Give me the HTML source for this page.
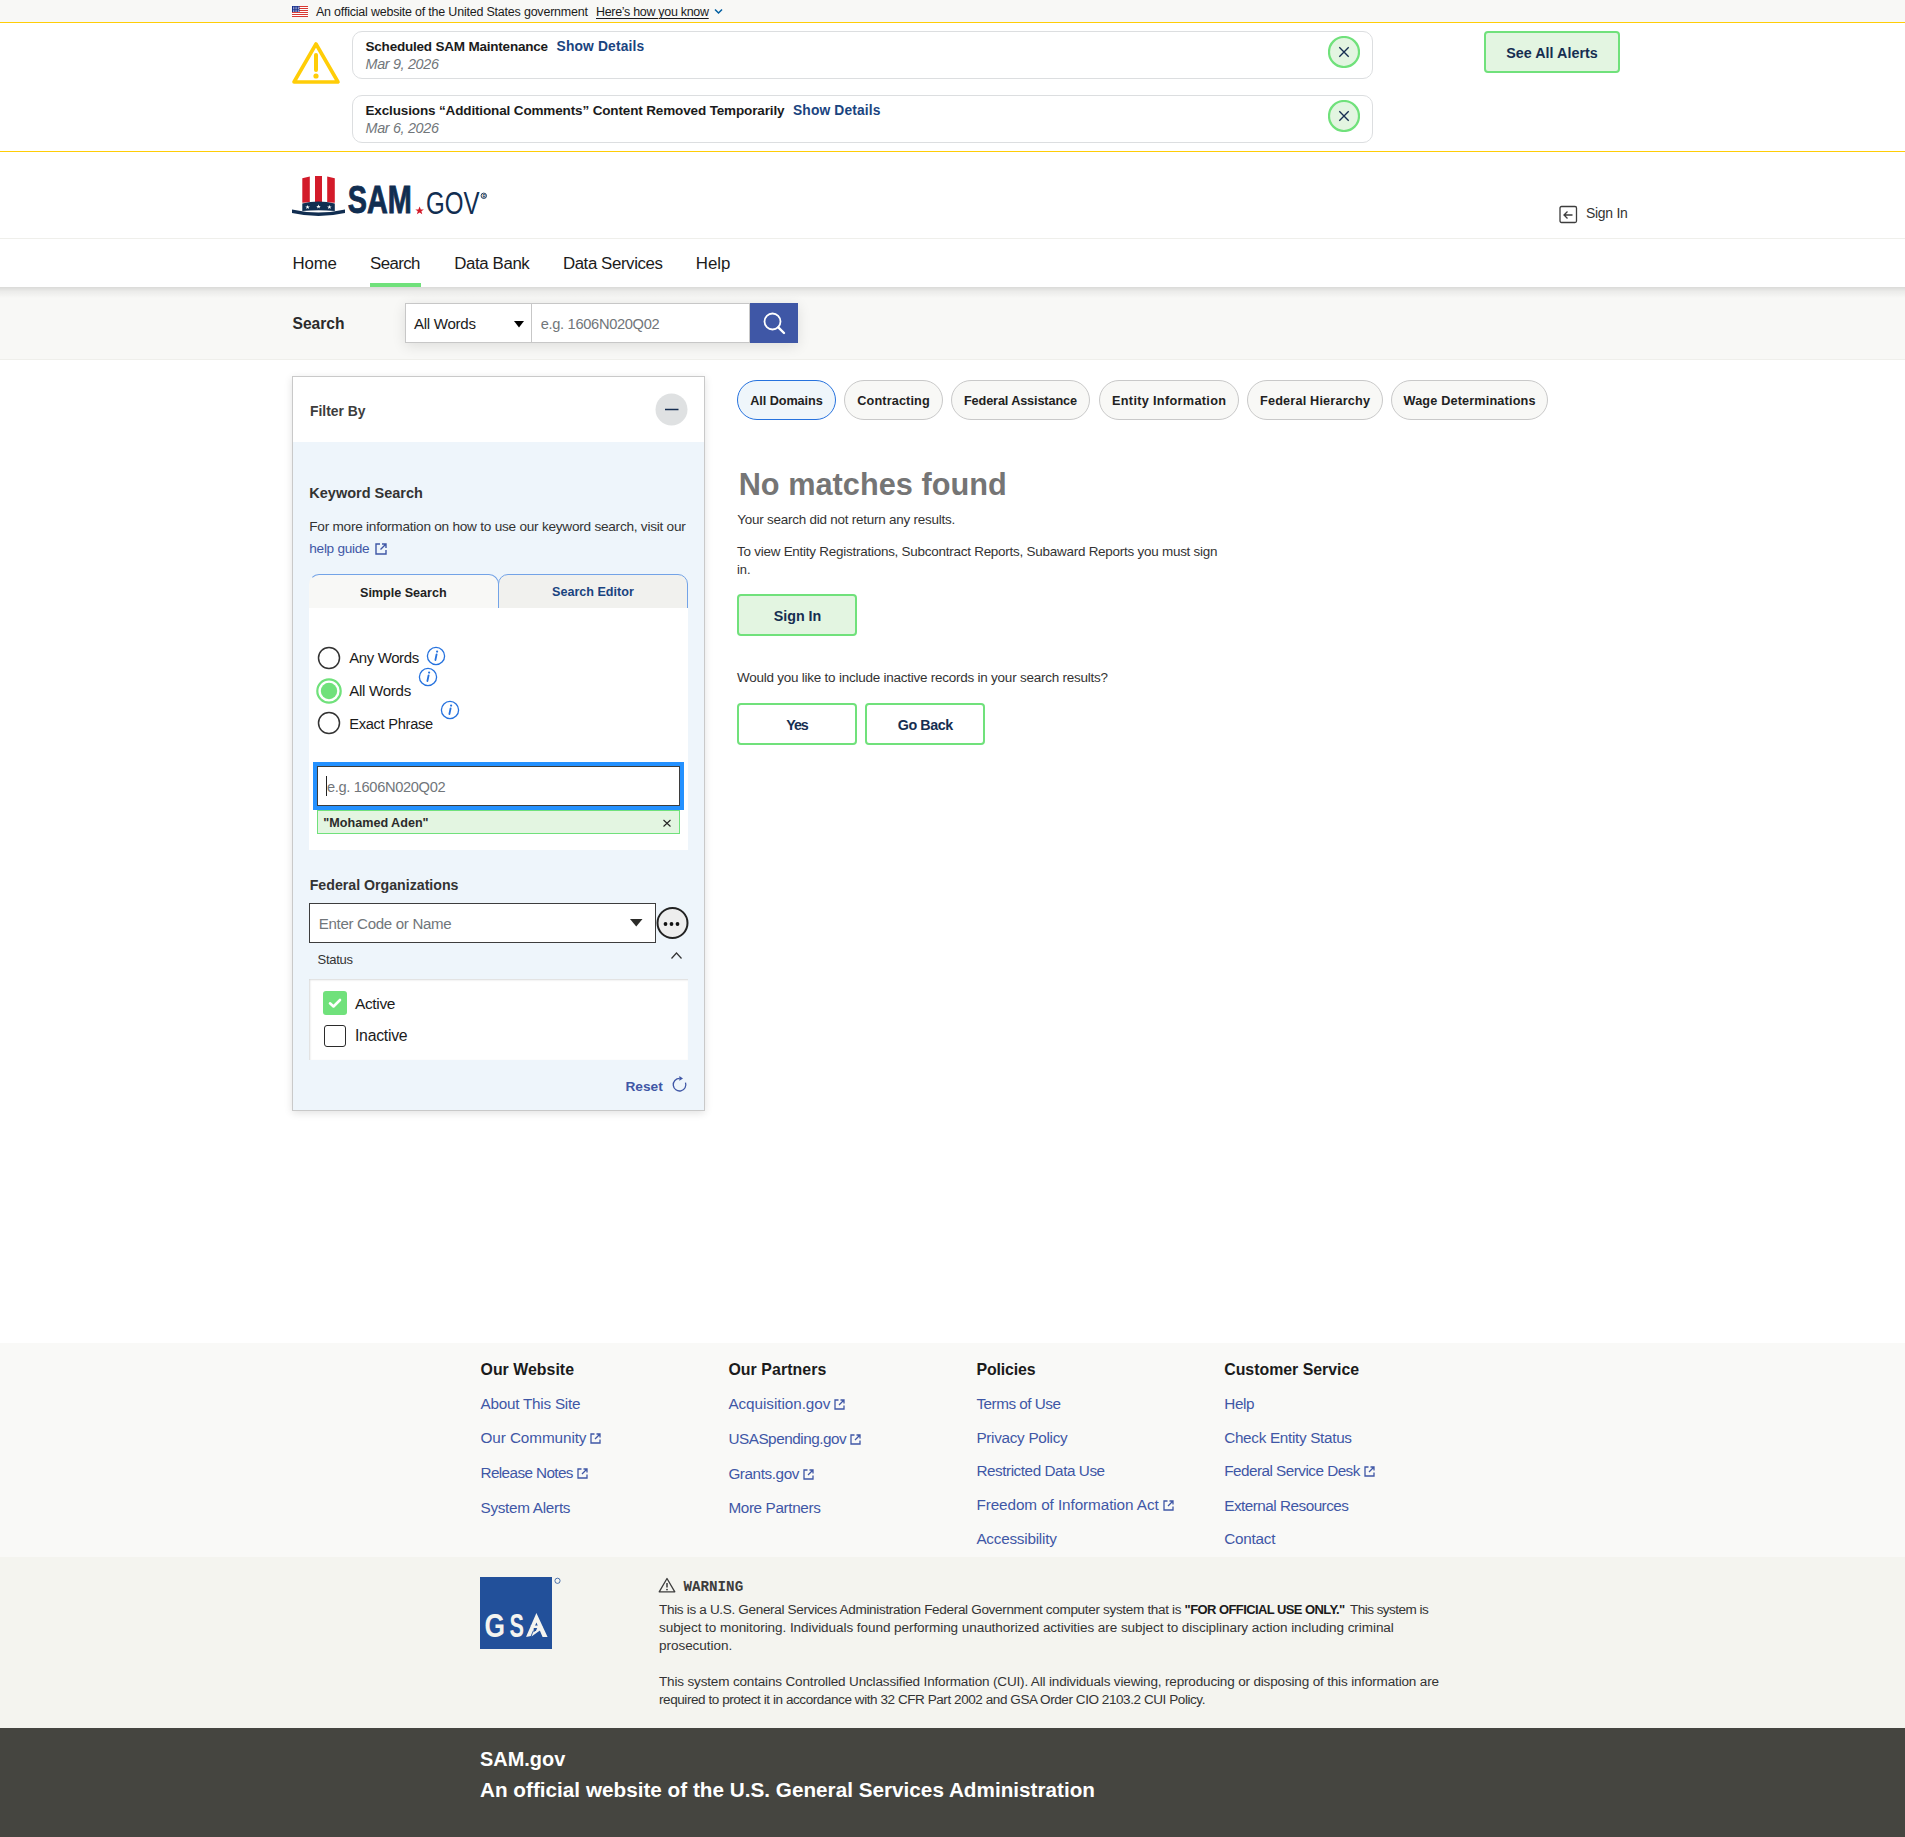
<!DOCTYPE html>
<html><head><meta charset="utf-8"><title>SAM.gov Search</title>
<style>
html,body{margin:0;padding:0;background:#fff;width:1905px;height:1837px;overflow:hidden;position:relative;font-family:"Liberation Sans",sans-serif}
svg text{font-family:"Liberation Sans",sans-serif}
</style></head><body>
<div style="position:absolute;left:0px;top:0px;width:1905px;height:22px;background:#f8f8f6"></div>
<div style="position:absolute;left:0px;top:22px;width:1905px;height:1px;background:#ffcd07"></div>
<svg style="position:absolute;left:292px;top:6px;image-rendering:pixelated" width="16" height="11" viewBox="0 0 16 11"><rect x="0" y="0" width="16" height="1" fill="#d83933"/><rect x="0" y="1" width="16" height="1" fill="#fff"/><rect x="0" y="2" width="16" height="1" fill="#d83933"/><rect x="0" y="3" width="16" height="1" fill="#fff"/><rect x="0" y="4" width="16" height="1" fill="#d83933"/><rect x="0" y="5" width="16" height="1" fill="#fff"/><rect x="0" y="6" width="16" height="1" fill="#d83933"/><rect x="0" y="7" width="16" height="1" fill="#fff"/><rect x="0" y="8" width="16" height="1" fill="#d83933"/><rect x="0" y="9" width="16" height="1" fill="#fff"/><rect x="0" y="10" width="16" height="1" fill="#d83933"/><rect x="0" y="0" width="7.5" height="6" fill="#162e8c"/><rect x="1.0" y="0.8" width="0.8" height="0.8" fill="#fff"/><rect x="1.0" y="2.3" width="0.8" height="0.8" fill="#fff"/><rect x="1.0" y="3.8" width="0.8" height="0.8" fill="#fff"/><rect x="1.0" y="5.3" width="0.8" height="0.8" fill="#fff"/><rect x="2.7" y="0.8" width="0.8" height="0.8" fill="#fff"/><rect x="2.7" y="2.3" width="0.8" height="0.8" fill="#fff"/><rect x="2.7" y="3.8" width="0.8" height="0.8" fill="#fff"/><rect x="2.7" y="5.3" width="0.8" height="0.8" fill="#fff"/><rect x="4.4" y="0.8" width="0.8" height="0.8" fill="#fff"/><rect x="4.4" y="2.3" width="0.8" height="0.8" fill="#fff"/><rect x="4.4" y="3.8" width="0.8" height="0.8" fill="#fff"/><rect x="4.4" y="5.3" width="0.8" height="0.8" fill="#fff"/><rect x="6.1" y="0.8" width="0.8" height="0.8" fill="#fff"/><rect x="6.1" y="2.3" width="0.8" height="0.8" fill="#fff"/><rect x="6.1" y="3.8" width="0.8" height="0.8" fill="#fff"/><rect x="6.1" y="5.3" width="0.8" height="0.8" fill="#fff"/></svg>
<svg style="position:absolute;left:714px;top:8px;" width="9" height="7" viewBox="0 0 9 7"><path d="M1 1.5 L4.5 5 L8 1.5" fill="none" stroke="#005ea2" stroke-width="1.5"/></svg>
<div style="position:absolute;left:0px;top:23px;width:1905px;height:128px;background:#fff"></div>
<div style="position:absolute;left:0px;top:151px;width:1905px;height:1px;background:#ffcd07"></div>
<svg style="position:absolute;left:291px;top:40px;" width="50" height="46" viewBox="0 0 50 46"><path d="M25 4 L47 42 L3 42 Z" fill="none" stroke="#ffcd07" stroke-width="3.6" stroke-linejoin="round"/><path d="M25 15 L25 30" stroke="#ffcd07" stroke-width="4" stroke-linecap="round"/><circle cx="25" cy="36" r="2.6" fill="#ffcd07"/></svg>
<div style="position:absolute;left:352px;top:31px;width:1021px;height:48px;box-sizing:border-box;border:1px solid #dcdee0;border-radius:10px;background:#fff"></div>
<svg style="position:absolute;left:1328px;top:36px;" width="32" height="32" viewBox="0 0 32 32"><circle cx="16" cy="16" r="15" fill="#e3f5e1" stroke="#70e17b" stroke-width="2.2"/><path d="M11.3 11.3 L20.7 20.7 M20.7 11.3 L11.3 20.7" stroke="#162e51" stroke-width="1.35"/></svg>
<div style="position:absolute;left:352px;top:95px;width:1021px;height:48px;box-sizing:border-box;border:1px solid #dcdee0;border-radius:10px;background:#fff"></div>
<svg style="position:absolute;left:1328px;top:100px;" width="32" height="32" viewBox="0 0 32 32"><circle cx="16" cy="16" r="15" fill="#e3f5e1" stroke="#70e17b" stroke-width="2.2"/><path d="M11.3 11.3 L20.7 20.7 M20.7 11.3 L11.3 20.7" stroke="#162e51" stroke-width="1.35"/></svg>
<div style="position:absolute;left:1484px;top:31px;width:136px;height:42px;box-sizing:border-box;border:2px solid #70e17b;border-radius:4px;background:#e3f5e1"></div>
<div style="position:absolute;left:0px;top:152px;width:1905px;height:86px;background:#fff"></div>
<div style="position:absolute;left:0px;top:238px;width:1905px;height:1px;background:#efefeb"></div>
<svg style="position:absolute;left:292px;top:176px;" width="54" height="42" viewBox="0 0 54 42">
<path d="M10.3 2.2 L17.8 0.6 L17.8 26.3 L10.3 26.8 Z" fill="#d31b2a"/>
<path d="M23 0 L30 0 L30 26 L23 26 Z" fill="#d31b2a"/>
<path d="M35.2 0.6 L42.8 2.2 L42.8 26.8 L35.2 26.3 Z" fill="#d31b2a"/>
<path d="M10.3 27.6 Q26.5 23.6 42.8 27.6 L42.8 35 Q26.5 33.6 10.3 35 Z" fill="#112e51"/>
<path d="M0 33.4 Q26.5 39.5 53 33.4 L53 37 Q26.5 43 0 37 Z" fill="#112e51"/>
<g fill="#fff">
<path d="M15.6 28.9 L16.2 30.5 L17.9 30.5 L16.5 31.5 L17.1 33.1 L15.6 32.1 L14.1 33.1 L14.7 31.5 L13.3 30.5 L15 30.5 Z"/>
<path d="M26.5 28.4 L27.1 30 L28.8 30 L27.4 31 L28 32.6 L26.5 31.6 L25 32.6 L25.6 31 L24.2 30 L25.9 30 Z"/>
<path d="M37.4 28.9 L38 30.5 L39.7 30.5 L38.3 31.5 L38.9 33.1 L37.4 32.1 L35.9 33.1 L36.5 31.5 L35.1 30.5 L36.8 30.5 Z"/>
</g>
</svg>
<svg style="position:absolute;left:346px;top:180px" width="145" height="40" viewBox="0 0 145 40"><text x="1.8" y="33" font-family="Liberation Sans" font-weight="700" font-size="38.5" fill="#112e51" stroke="#112e51" stroke-width="0.9" textLength="64" lengthAdjust="spacingAndGlyphs">SAM</text><path d="M73.6 26.5 L74.8 29.4 L77.9 29.4 L75.4 31.2 L76.3 34.2 L73.6 32.4 L70.9 34.2 L71.8 31.2 L69.3 29.4 L72.4 29.4 Z" fill="#d31b2a"/><text x="80" y="33.5" font-family="Liberation Sans" font-weight="400" font-size="30.5" fill="#112e51" textLength="53.5" lengthAdjust="spacingAndGlyphs">GOV</text><circle cx="137.8" cy="15.8" r="2.7" fill="none" stroke="#112e51" stroke-width="0.9"/><text x="136.4" y="17.5" font-family="Liberation Sans" font-size="4.5" font-weight="700" fill="#112e51">R</text></svg>
<svg style="position:absolute;left:1559px;top:205px;" width="19" height="19" viewBox="0 0 19 19"><rect x="1" y="1.5" width="16.5" height="16" rx="1.5" fill="none" stroke="#3d3d3d" stroke-width="1.3"/><path d="M5 10 L13.5 10 M8.5 6.5 L5 10 L8.5 13.5" fill="none" stroke="#3d3d3d" stroke-width="1.3"/></svg>
<div style="position:absolute;left:0px;top:239px;width:1905px;height:48px;background:#fff;z-index:2"></div>
<div style="position:absolute;left:0;top:287px;width:1905px;height:11px;z-index:2;background:linear-gradient(rgba(0,0,0,0.12),rgba(0,0,0,0.05) 40%,rgba(0,0,0,0))"></div>
<div style="position:absolute;left:370px;top:283px;width:51px;height:4px;background:#70e17b;z-index:3"></div>
<div style="position:absolute;left:0px;top:287px;width:1905px;height:73px;background:#f8f8f6;border-bottom:1px solid #efefeb;box-sizing:border-box"></div>
<div style="position:absolute;left:405px;top:303px;width:393px;height:40px;box-shadow:0 3px 14px rgba(0,0,0,0.11)"></div>
<div style="position:absolute;left:405px;top:303px;width:127px;height:40px;box-sizing:border-box;border:1px solid #c7c7c7;background:#fff"></div>
<svg style="position:absolute;left:514px;top:321px;" width="10" height="7" viewBox="0 0 10 7"><path d="M0 0 L10 0 L5 6.5 Z" fill="#000"/></svg>
<div style="position:absolute;left:531px;top:303px;width:219px;height:40px;box-sizing:border-box;border:1px solid #c7c7c7;background:#fff"></div>
<div style="position:absolute;left:750px;top:303px;width:48px;height:40px;background:#3f57a6"></div>
<svg style="position:absolute;left:762px;top:311px;" width="24" height="24" viewBox="0 0 24 24"><circle cx="10.5" cy="10.5" r="8" fill="none" stroke="#fff" stroke-width="1.8"/><path d="M16.3 16.3 L22 22" stroke="#fff" stroke-width="2.4" stroke-linecap="round"/></svg>
<div style="position:absolute;left:292px;top:376px;width:413px;height:735px;box-sizing:border-box;border:1px solid #c9c9c9;background:#eef5fb;box-shadow:0 2px 8px rgba(0,0,0,0.12)"></div>
<div style="position:absolute;left:293px;top:377px;width:411px;height:65px;background:#fff"></div>
<svg style="position:absolute;left:655px;top:393px;" width="33" height="33" viewBox="0 0 33 33"><circle cx="16.5" cy="16.5" r="16" fill="#dfe1e2"/><path d="M10 16.5 L23.5 16.5" stroke="#162e51" stroke-width="1.5"/></svg>
<svg style="position:absolute;left:374px;top:542px;" width="14" height="14" viewBox="0 0 14 14"><path d="M6 2 L2 2 L2 12 L12 12 L12 8" fill="none" stroke="#3f57a6" stroke-width="1.4"/><path d="M8 2 L12 2 L12 6 M12 2 L6.5 7.5" fill="none" stroke="#3f57a6" stroke-width="1.4"/></svg>
<div style="position:absolute;left:309px;top:574px;width:190px;height:35px;box-sizing:border-box;border:1px solid #73a3e7;border-left-color:transparent;border-bottom:none;border-radius:10px 10px 0 0;background:#f8f8f6"></div>
<div style="position:absolute;left:498px;top:574px;width:190px;height:35px;box-sizing:border-box;border:1px solid #73a3e7;border-radius:10px 10px 0 0;background:#f1f1ee"></div>
<div style="position:absolute;left:309px;top:608px;width:379px;height:242px;background:#fff"></div>
<svg style="position:absolute;left:317px;top:646px;" width="24" height="24" viewBox="0 0 24 24"><circle cx="12" cy="12" r="10.5" fill="#fff" stroke="#333" stroke-width="1.5"/></svg>
<svg style="position:absolute;left:317px;top:711px;" width="24" height="24" viewBox="0 0 24 24"><circle cx="12" cy="12" r="10.5" fill="#fff" stroke="#333" stroke-width="1.5"/></svg>
<svg style="position:absolute;left:316px;top:678px;" width="26" height="26" viewBox="0 0 26 26"><circle cx="13" cy="13" r="11.7" fill="#fff" stroke="#70e17b" stroke-width="2.2"/><circle cx="13" cy="13" r="8.2" fill="#70e17b"/></svg>
<svg style="position:absolute;left:426px;top:646px;" width="20" height="20" viewBox="0 0 20 20"><circle cx="10" cy="10" r="8.6" fill="none" stroke="#2672de" stroke-width="1.3"/><path d="M10.6 8.3 L9.4 14" stroke="#2672de" stroke-width="1.8" stroke-linecap="round"/><circle cx="11.1" cy="5.6" r="1.1" fill="#2672de"/></svg>
<svg style="position:absolute;left:418px;top:667px;" width="20" height="20" viewBox="0 0 20 20"><circle cx="10" cy="10" r="8.6" fill="none" stroke="#2672de" stroke-width="1.3"/><path d="M10.6 8.3 L9.4 14" stroke="#2672de" stroke-width="1.8" stroke-linecap="round"/><circle cx="11.1" cy="5.6" r="1.1" fill="#2672de"/></svg>
<svg style="position:absolute;left:440px;top:700px;" width="20" height="20" viewBox="0 0 20 20"><circle cx="10" cy="10" r="8.6" fill="none" stroke="#2672de" stroke-width="1.3"/><path d="M10.6 8.3 L9.4 14" stroke="#2672de" stroke-width="1.8" stroke-linecap="round"/><circle cx="11.1" cy="5.6" r="1.1" fill="#2672de"/></svg>
<div style="position:absolute;left:313px;top:762px;width:371px;height:48px;background:#2491ff"></div>
<div style="position:absolute;left:317px;top:766px;width:363px;height:40px;box-sizing:border-box;border:1px solid #3d3d3d;background:#fff"></div>
<div style="position:absolute;left:326px;top:776px;width:1px;height:20px;background:#222"></div>
<div style="position:absolute;left:317px;top:810px;width:363px;height:24px;box-sizing:border-box;border:1px solid #70e17b;background:#e3f5e1"></div>
<svg style="position:absolute;left:662px;top:819px;" width="10" height="9" viewBox="0 0 10 9"><path d="M1.5 1 L8.5 7.5 M8.5 1 L1.5 7.5" stroke="#222" stroke-width="1.1"/></svg>
<div style="position:absolute;left:309px;top:903px;width:347px;height:40px;box-sizing:border-box;border:1px solid #3d3d3d;background:#fff"></div>
<svg style="position:absolute;left:630px;top:919px;" width="13" height="8" viewBox="0 0 13 8"><path d="M0 0 L12.5 0 L6.25 7.5 Z" fill="#2b2b28"/></svg>
<svg style="position:absolute;left:656px;top:906px;" width="33" height="34" viewBox="0 0 33 34"><circle cx="16.5" cy="17" r="15" fill="#ededed" stroke="#222" stroke-width="2"/><circle cx="9.5" cy="18" r="1.9" fill="#111"/><circle cx="15.5" cy="18" r="1.9" fill="#111"/><circle cx="21.5" cy="18" r="1.9" fill="#111"/></svg>
<svg style="position:absolute;left:670px;top:951px;" width="13" height="9" viewBox="0 0 13 9"><path d="M1.5 7.5 L6.5 2 L11.5 7.5" fill="none" stroke="#333" stroke-width="1.2"/></svg>
<div style="position:absolute;left:309px;top:979px;width:379px;height:81px;background:#fff;box-shadow:inset 1px 1px 2px rgba(0,0,0,0.15)"></div>
<div style="position:absolute;left:323px;top:991px;width:24px;height:24px;background:#70e17b;border-radius:3px"></div>
<svg style="position:absolute;left:323px;top:991px;" width="24" height="24" viewBox="0 0 24 24"><path d="M7 12.3 L10.5 15.5 L17 9" fill="none" stroke="#fff" stroke-width="2.6" stroke-linecap="round" stroke-linejoin="round"/></svg>
<div style="position:absolute;left:324px;top:1025px;width:22px;height:22px;box-sizing:border-box;border:1.7px solid #2b2b2b;border-radius:3px;background:#fff"></div>
<svg style="position:absolute;left:671px;top:1074px;" width="18" height="19" viewBox="0 0 18 19"><path d="M8.6 4.4 A6.3 6.3 0 1 0 14.5 8.6" fill="none" stroke="#3f57a6" stroke-width="1.3"/><path d="M8.4 2.1 L12 4.4 L8.4 6.8 Z" fill="#3f57a6"/></svg>
<div style="position:absolute;left:737px;top:380px;width:99px;height:40px;box-sizing:border-box;border:1.5px solid #2672de;border-radius:20px;background:#eff6fb"></div>
<div style="position:absolute;left:844px;top:380px;width:99px;height:40px;box-sizing:border-box;border:1px solid #c9c9c9;border-radius:20px;background:#f8f8f6"></div>
<div style="position:absolute;left:951px;top:380px;width:139px;height:40px;box-sizing:border-box;border:1px solid #c9c9c9;border-radius:20px;background:#f8f8f6"></div>
<div style="position:absolute;left:1099px;top:380px;width:140px;height:40px;box-sizing:border-box;border:1px solid #c9c9c9;border-radius:20px;background:#f8f8f6"></div>
<div style="position:absolute;left:1247px;top:380px;width:136px;height:40px;box-sizing:border-box;border:1px solid #c9c9c9;border-radius:20px;background:#f8f8f6"></div>
<div style="position:absolute;left:1391px;top:380px;width:157px;height:40px;box-sizing:border-box;border:1px solid #c9c9c9;border-radius:20px;background:#f8f8f6"></div>
<div style="position:absolute;left:737px;top:594px;width:120px;height:42px;box-sizing:border-box;border:2px solid #70e17b;border-radius:4px;background:#e3f5e1"></div>
<div style="position:absolute;left:737px;top:703px;width:120px;height:42px;box-sizing:border-box;border:2px solid #70e17b;border-radius:4px;background:#fff"></div>
<div style="position:absolute;left:865px;top:703px;width:120px;height:42px;box-sizing:border-box;border:2px solid #70e17b;border-radius:4px;background:#fff"></div>
<div style="position:absolute;left:0px;top:1343px;width:1905px;height:214px;background:#f9f9f7"></div>
<div style="position:absolute;left:0px;top:1557px;width:1905px;height:171px;background:#f4f4ef"></div>
<svg style="position:absolute;left:480px;top:1577px" width="82" height="73" viewBox="0 0 82 73"><rect x="0" y="0" width="72" height="72" fill="#22509a"/><text x="4.5" y="60.4" font-family="Liberation Sans" font-weight="700" font-size="34" fill="#f4f4ef" textLength="20.5" lengthAdjust="spacingAndGlyphs">G</text><text x="29.5" y="60.4" font-family="Liberation Sans" font-weight="700" font-size="34" fill="#f4f4ef" textLength="14.5" lengthAdjust="spacingAndGlyphs">S</text><path d="M56.4 36 L67.6 60 L62.6 60 L56.4 45.5 L50.7 59 L46 60 Z" fill="#f4f4ef"/><path d="M50.5 48.5 L61.8 48.5 L63 51.5 L58.5 54.5 L51.5 59.5 L53.5 54 Z" fill="#f4f4ef"/><path d="M53.8 51 L57.2 51 L56.2 53.2 L53.4 55.6 Z" fill="#22509a"/><circle cx="77.5" cy="3.8" r="2.6" fill="none" stroke="#22509a" stroke-width="0.8"/></svg>
<svg style="position:absolute;left:658px;top:1577px;" width="18" height="16" viewBox="0 0 18 16"><path d="M9 1.5 L16.8 14.8 L1.2 14.8 Z" fill="none" stroke="#3d3d3d" stroke-width="1.3" stroke-linejoin="round"/><path d="M9 6 L9 10.5" stroke="#3d3d3d" stroke-width="1.5"/><circle cx="9" cy="12.6" r="0.9" fill="#3d3d3d"/></svg>
<div style="position:absolute;left:0px;top:1728px;width:1905px;height:109px;background:#454540"></div>
<div style="position:absolute;left:316.00px;top:6.00px;white-space:nowrap;font-family:'Liberation Sans',sans-serif;font-size:12.48px;line-height:1;font-weight:400;font-style:normal;color:#1b1b1b;letter-spacing:-0.198px;">An official website of the United States government</div>
<div style="position:absolute;left:596.00px;top:6.00px;white-space:nowrap;font-family:'Liberation Sans',sans-serif;font-size:12.48px;line-height:1;font-weight:400;font-style:normal;color:#1b1b1b;letter-spacing:-0.294px;text-decoration:underline;text-underline-offset:2px">Here’s how you know</div>
<div style="position:absolute;left:365.50px;top:40.00px;white-space:nowrap;font-family:'Liberation Sans',sans-serif;font-size:13.5px;line-height:1;font-weight:700;font-style:normal;color:#1b1b1b;letter-spacing:-0.206px;">Scheduled SAM Maintenance</div>
<div style="position:absolute;left:556.60px;top:40.00px;white-space:nowrap;font-family:'Liberation Sans',sans-serif;font-size:13.8px;line-height:1;font-weight:700;font-style:normal;color:#1a4480;letter-spacing:0.148px;">Show Details</div>
<div style="position:absolute;left:365.50px;top:57.00px;white-space:nowrap;font-family:'Liberation Sans',sans-serif;font-size:14.35px;line-height:1;font-weight:400;font-style:italic;color:#71767a;letter-spacing:-0.315px;">Mar 9, 2026</div>
<div style="position:absolute;left:365.50px;top:104.00px;white-space:nowrap;font-family:'Liberation Sans',sans-serif;font-size:13.5px;line-height:1;font-weight:700;font-style:normal;color:#1b1b1b;letter-spacing:-0.141px;">Exclusions “Additional Comments” Content Removed Temporarily</div>
<div style="position:absolute;left:793.00px;top:104.00px;white-space:nowrap;font-family:'Liberation Sans',sans-serif;font-size:13.8px;line-height:1;font-weight:700;font-style:normal;color:#1a4480;letter-spacing:0.148px;">Show Details</div>
<div style="position:absolute;left:365.50px;top:121.00px;white-space:nowrap;font-family:'Liberation Sans',sans-serif;font-size:14.35px;line-height:1;font-weight:400;font-style:italic;color:#71767a;letter-spacing:-0.315px;">Mar 6, 2026</div>
<div style="position:absolute;left:1506.25px;top:46.00px;white-space:nowrap;font-family:'Liberation Sans',sans-serif;font-size:14.3px;line-height:1;font-weight:700;font-style:normal;color:#162e51;letter-spacing:0.029px;">See All Alerts</div>
<div style="position:absolute;left:1586.00px;top:207.00px;white-space:nowrap;font-family:'Liberation Sans',sans-serif;font-size:13.94px;line-height:1;font-weight:400;font-style:normal;color:#333;letter-spacing:-0.268px;">Sign In</div>
<div style="position:absolute;left:292.60px;top:256.00px;white-space:nowrap;font-family:'Liberation Sans',sans-serif;font-size:16.85px;line-height:1;font-weight:400;font-style:normal;color:#1b1b1b;letter-spacing:-0.179px;z-index:3">Home</div>
<div style="position:absolute;left:370.00px;top:256.00px;white-space:nowrap;font-family:'Liberation Sans',sans-serif;font-size:16.85px;line-height:1;font-weight:400;font-style:normal;color:#1b1b1b;letter-spacing:-0.595px;z-index:3">Search</div>
<div style="position:absolute;left:454.30px;top:256.00px;white-space:nowrap;font-family:'Liberation Sans',sans-serif;font-size:16.85px;line-height:1;font-weight:400;font-style:normal;color:#1b1b1b;letter-spacing:-0.395px;z-index:3">Data Bank</div>
<div style="position:absolute;left:562.90px;top:256.00px;white-space:nowrap;font-family:'Liberation Sans',sans-serif;font-size:16.85px;line-height:1;font-weight:400;font-style:normal;color:#1b1b1b;letter-spacing:-0.405px;z-index:3">Data Services</div>
<div style="position:absolute;left:695.80px;top:256.00px;white-space:nowrap;font-family:'Liberation Sans',sans-serif;font-size:16.85px;line-height:1;font-weight:400;font-style:normal;color:#1b1b1b;letter-spacing:0.015px;z-index:3">Help</div>
<div style="position:absolute;left:292.50px;top:316.00px;white-space:nowrap;font-family:'Liberation Sans',sans-serif;font-size:15.6px;line-height:1;font-weight:700;font-style:normal;color:#2b2b2b;letter-spacing:-0.003px;">Search</div>
<div style="position:absolute;left:414.00px;top:316.00px;white-space:nowrap;font-family:'Liberation Sans',sans-serif;font-size:15.08px;line-height:1;font-weight:400;font-style:normal;color:#1b1b1b;letter-spacing:-0.281px;">All Words</div>
<div style="position:absolute;left:540.70px;top:317.00px;white-space:nowrap;font-family:'Liberation Sans',sans-serif;font-size:14.66px;line-height:1;font-weight:400;font-style:normal;color:#71767a;letter-spacing:-0.325px;">e.g. 1606N020Q02</div>
<div style="position:absolute;left:310.00px;top:405.00px;white-space:nowrap;font-family:'Liberation Sans',sans-serif;font-size:13.9px;line-height:1;font-weight:700;font-style:normal;color:#3d3d3d;letter-spacing:-0.010px;">Filter By</div>
<div style="position:absolute;left:309.30px;top:486.00px;white-space:nowrap;font-family:'Liberation Sans',sans-serif;font-size:14.5px;line-height:1;font-weight:700;font-style:normal;color:#333;letter-spacing:-0.003px;">Keyword Search</div>
<div style="position:absolute;left:309.30px;top:520.00px;white-space:nowrap;font-family:'Liberation Sans',sans-serif;font-size:13.62px;line-height:1;font-weight:400;font-style:normal;color:#333;letter-spacing:-0.243px;">For more information on how to use our keyword search, visit our</div>
<div style="position:absolute;left:309.30px;top:542.00px;white-space:nowrap;font-family:'Liberation Sans',sans-serif;font-size:13.62px;line-height:1;font-weight:400;font-style:normal;color:#3f57a6;letter-spacing:-0.279px;">help guide</div>
<div style="position:absolute;left:360.00px;top:587.00px;white-space:nowrap;font-family:'Liberation Sans',sans-serif;font-size:12.6px;line-height:1;font-weight:700;font-style:normal;color:#222;letter-spacing:-0.018px;">Simple Search</div>
<div style="position:absolute;left:552.00px;top:586.00px;white-space:nowrap;font-family:'Liberation Sans',sans-serif;font-size:12.6px;line-height:1;font-weight:700;font-style:normal;color:#1a4480;letter-spacing:-0.008px;">Search Editor</div>
<div style="position:absolute;left:349.20px;top:650.00px;white-space:nowrap;font-family:'Liberation Sans',sans-serif;font-size:14.98px;line-height:1;font-weight:400;font-style:normal;color:#1b1b1b;letter-spacing:-0.367px;">Any Words</div>
<div style="position:absolute;left:349.20px;top:683.00px;white-space:nowrap;font-family:'Liberation Sans',sans-serif;font-size:15.08px;line-height:1;font-weight:400;font-style:normal;color:#1b1b1b;letter-spacing:-0.281px;">All Words</div>
<div style="position:absolute;left:349.20px;top:717.00px;white-space:nowrap;font-family:'Liberation Sans',sans-serif;font-size:14.66px;line-height:1;font-weight:400;font-style:normal;color:#1b1b1b;letter-spacing:-0.288px;">Exact Phrase</div>
<div style="position:absolute;left:327.00px;top:780.00px;white-space:nowrap;font-family:'Liberation Sans',sans-serif;font-size:14.66px;line-height:1;font-weight:400;font-style:normal;color:#71767a;letter-spacing:-0.352px;">e.g. 1606N020Q02</div>
<div style="position:absolute;left:323.30px;top:817.00px;white-space:nowrap;font-family:'Liberation Sans',sans-serif;font-size:12.6px;line-height:1;font-weight:700;font-style:normal;color:#2b2b2b;letter-spacing:0.005px;">"Mohamed Aden"</div>
<div style="position:absolute;left:309.70px;top:878.00px;white-space:nowrap;font-family:'Liberation Sans',sans-serif;font-size:14.2px;line-height:1;font-weight:700;font-style:normal;color:#333;letter-spacing:-0.011px;">Federal Organizations</div>
<div style="position:absolute;left:318.70px;top:916.00px;white-space:nowrap;font-family:'Liberation Sans',sans-serif;font-size:15.08px;line-height:1;font-weight:400;font-style:normal;color:#71767a;letter-spacing:-0.311px;">Enter Code or Name</div>
<div style="position:absolute;left:317.60px;top:953.00px;white-space:nowrap;font-family:'Liberation Sans',sans-serif;font-size:13.0px;line-height:1;font-weight:400;font-style:normal;color:#333;letter-spacing:-0.292px;">Status</div>
<div style="position:absolute;left:355.00px;top:996.00px;white-space:nowrap;font-family:'Liberation Sans',sans-serif;font-size:15.5px;line-height:1;font-weight:400;font-style:normal;color:#1b1b1b;letter-spacing:-0.364px;">Active</div>
<div style="position:absolute;left:355.00px;top:1028.00px;white-space:nowrap;font-family:'Liberation Sans',sans-serif;font-size:15.81px;line-height:1;font-weight:400;font-style:normal;color:#1b1b1b;letter-spacing:-0.265px;">Inactive</div>
<div style="position:absolute;left:625.50px;top:1080.00px;white-space:nowrap;font-family:'Liberation Sans',sans-serif;font-size:13.7px;line-height:1;font-weight:700;font-style:normal;color:#3f57a6;letter-spacing:-0.020px;">Reset</div>
<div style="position:absolute;left:750.20px;top:395.00px;white-space:nowrap;font-family:'Liberation Sans',sans-serif;font-size:12.7px;line-height:1;font-weight:700;font-style:normal;color:#222;letter-spacing:-0.073px;">All Domains</div>
<div style="position:absolute;left:857.30px;top:395.00px;white-space:nowrap;font-family:'Liberation Sans',sans-serif;font-size:12.7px;line-height:1;font-weight:700;font-style:normal;color:#222;letter-spacing:0.120px;">Contracting</div>
<div style="position:absolute;left:964.00px;top:395.00px;white-space:nowrap;font-family:'Liberation Sans',sans-serif;font-size:12.7px;line-height:1;font-weight:700;font-style:normal;color:#222;letter-spacing:-0.129px;">Federal Assistance</div>
<div style="position:absolute;left:1112.00px;top:395.00px;white-space:nowrap;font-family:'Liberation Sans',sans-serif;font-size:12.7px;line-height:1;font-weight:700;font-style:normal;color:#222;letter-spacing:0.321px;">Entity Information</div>
<div style="position:absolute;left:1260.00px;top:395.00px;white-space:nowrap;font-family:'Liberation Sans',sans-serif;font-size:12.7px;line-height:1;font-weight:700;font-style:normal;color:#222;letter-spacing:0.175px;">Federal Hierarchy</div>
<div style="position:absolute;left:1403.50px;top:395.00px;white-space:nowrap;font-family:'Liberation Sans',sans-serif;font-size:12.7px;line-height:1;font-weight:700;font-style:normal;color:#222;letter-spacing:0.153px;">Wage Determinations</div>
<div style="position:absolute;left:738.70px;top:470.00px;white-space:nowrap;font-family:'Liberation Sans',sans-serif;font-size:30.7px;line-height:1;font-weight:700;font-style:normal;color:#757575;letter-spacing:0.021px;">No matches found</div>
<div style="position:absolute;left:737.30px;top:513.00px;white-space:nowrap;font-family:'Liberation Sans',sans-serif;font-size:13.45px;line-height:1;font-weight:400;font-style:normal;color:#333;letter-spacing:-0.226px;">Your search did not return any results.</div>
<div style="position:absolute;left:737.00px;top:545.00px;white-space:nowrap;font-family:'Liberation Sans',sans-serif;font-size:13.44px;line-height:1;font-weight:400;font-style:normal;color:#333;letter-spacing:-0.239px;">To view Entity Registrations, Subcontract Reports, Subaward Reports you must sign</div>
<div style="position:absolute;left:737.00px;top:564.00px;white-space:nowrap;font-family:'Liberation Sans',sans-serif;font-size:12.92px;line-height:1;font-weight:400;font-style:normal;color:#333;letter-spacing:0.000px;">in.</div>
<div style="position:absolute;left:773.65px;top:609.00px;white-space:nowrap;font-family:'Liberation Sans',sans-serif;font-size:14.3px;line-height:1;font-weight:700;font-style:normal;color:#162e51;letter-spacing:0.007px;">Sign In</div>
<div style="position:absolute;left:737.00px;top:671.00px;white-space:nowrap;font-family:'Liberation Sans',sans-serif;font-size:13.46px;line-height:1;font-weight:400;font-style:normal;color:#333;letter-spacing:-0.225px;">Would you like to include inactive records in your search results?</div>
<div style="position:absolute;left:786.35px;top:718.00px;white-space:nowrap;font-family:'Liberation Sans',sans-serif;font-size:14.3px;line-height:1;font-weight:700;font-style:normal;color:#162e51;letter-spacing:-1.178px;">Yes</div>
<div style="position:absolute;left:897.75px;top:718.00px;white-space:nowrap;font-family:'Liberation Sans',sans-serif;font-size:14.3px;line-height:1;font-weight:700;font-style:normal;color:#162e51;letter-spacing:-0.419px;">Go Back</div>
<div style="position:absolute;left:480.50px;top:1362.00px;white-space:nowrap;font-family:'Liberation Sans',sans-serif;font-size:15.9px;line-height:1;font-weight:700;font-style:normal;color:#1b1b1b;letter-spacing:0.019px;">Our Website</div>
<div style="position:absolute;left:480.50px;top:1396.00px;white-space:nowrap;font-family:'Liberation Sans',sans-serif;font-size:15.29px;line-height:1;font-weight:400;font-style:normal;color:#3f57a6;letter-spacing:-0.240px;">About This Site</div>
<div style="position:absolute;left:480.50px;top:1430.00px;white-space:nowrap;font-family:'Liberation Sans',sans-serif;font-size:15.29px;line-height:1;font-weight:400;font-style:normal;color:#3f57a6;letter-spacing:-0.083px;">Our Community<svg width="11" height="11" viewBox="0 0 11 11" style="margin-left:4px;vertical-align:-1px"><path d="M4.5 1 L1 1 L1 10 L10 10 L10 6.5" fill="none" stroke="#3f57a6" stroke-width="1.3"/><path d="M6.5 1 L10 1 L10 4.5 M10 1 L5 6" fill="none" stroke="#3f57a6" stroke-width="1.3"/></svg></div>
<div style="position:absolute;left:480.50px;top:1465.00px;white-space:nowrap;font-family:'Liberation Sans',sans-serif;font-size:15.29px;line-height:1;font-weight:400;font-style:normal;color:#3f57a6;letter-spacing:-0.603px;">Release Notes<svg width="11" height="11" viewBox="0 0 11 11" style="margin-left:4px;vertical-align:-1px"><path d="M4.5 1 L1 1 L1 10 L10 10 L10 6.5" fill="none" stroke="#3f57a6" stroke-width="1.3"/><path d="M6.5 1 L10 1 L10 4.5 M10 1 L5 6" fill="none" stroke="#3f57a6" stroke-width="1.3"/></svg></div>
<div style="position:absolute;left:480.50px;top:1500.00px;white-space:nowrap;font-family:'Liberation Sans',sans-serif;font-size:15.29px;line-height:1;font-weight:400;font-style:normal;color:#3f57a6;letter-spacing:-0.285px;">System Alerts</div>
<div style="position:absolute;left:728.40px;top:1362.00px;white-space:nowrap;font-family:'Liberation Sans',sans-serif;font-size:15.9px;line-height:1;font-weight:700;font-style:normal;color:#1b1b1b;letter-spacing:0.077px;">Our Partners</div>
<div style="position:absolute;left:728.40px;top:1396.00px;white-space:nowrap;font-family:'Liberation Sans',sans-serif;font-size:15.29px;line-height:1;font-weight:400;font-style:normal;color:#3f57a6;letter-spacing:-0.057px;">Acquisition.gov<svg width="11" height="11" viewBox="0 0 11 11" style="margin-left:4px;vertical-align:-1px"><path d="M4.5 1 L1 1 L1 10 L10 10 L10 6.5" fill="none" stroke="#3f57a6" stroke-width="1.3"/><path d="M6.5 1 L10 1 L10 4.5 M10 1 L5 6" fill="none" stroke="#3f57a6" stroke-width="1.3"/></svg></div>
<div style="position:absolute;left:728.40px;top:1431.00px;white-space:nowrap;font-family:'Liberation Sans',sans-serif;font-size:15.29px;line-height:1;font-weight:400;font-style:normal;color:#3f57a6;letter-spacing:-0.471px;">USASpending.gov<svg width="11" height="11" viewBox="0 0 11 11" style="margin-left:4px;vertical-align:-1px"><path d="M4.5 1 L1 1 L1 10 L10 10 L10 6.5" fill="none" stroke="#3f57a6" stroke-width="1.3"/><path d="M6.5 1 L10 1 L10 4.5 M10 1 L5 6" fill="none" stroke="#3f57a6" stroke-width="1.3"/></svg></div>
<div style="position:absolute;left:728.40px;top:1466.00px;white-space:nowrap;font-family:'Liberation Sans',sans-serif;font-size:15.29px;line-height:1;font-weight:400;font-style:normal;color:#3f57a6;letter-spacing:-0.417px;">Grants.gov<svg width="11" height="11" viewBox="0 0 11 11" style="margin-left:4px;vertical-align:-1px"><path d="M4.5 1 L1 1 L1 10 L10 10 L10 6.5" fill="none" stroke="#3f57a6" stroke-width="1.3"/><path d="M6.5 1 L10 1 L10 4.5 M10 1 L5 6" fill="none" stroke="#3f57a6" stroke-width="1.3"/></svg></div>
<div style="position:absolute;left:728.40px;top:1500.00px;white-space:nowrap;font-family:'Liberation Sans',sans-serif;font-size:15.29px;line-height:1;font-weight:400;font-style:normal;color:#3f57a6;letter-spacing:-0.369px;">More Partners</div>
<div style="position:absolute;left:976.40px;top:1362.00px;white-space:nowrap;font-family:'Liberation Sans',sans-serif;font-size:15.9px;line-height:1;font-weight:700;font-style:normal;color:#1b1b1b;letter-spacing:-0.111px;">Policies</div>
<div style="position:absolute;left:976.40px;top:1396.00px;white-space:nowrap;font-family:'Liberation Sans',sans-serif;font-size:15.29px;line-height:1;font-weight:400;font-style:normal;color:#3f57a6;letter-spacing:-0.492px;">Terms of Use</div>
<div style="position:absolute;left:976.40px;top:1430.00px;white-space:nowrap;font-family:'Liberation Sans',sans-serif;font-size:15.29px;line-height:1;font-weight:400;font-style:normal;color:#3f57a6;letter-spacing:-0.293px;">Privacy Policy</div>
<div style="position:absolute;left:976.40px;top:1463.00px;white-space:nowrap;font-family:'Liberation Sans',sans-serif;font-size:15.29px;line-height:1;font-weight:400;font-style:normal;color:#3f57a6;letter-spacing:-0.446px;">Restricted Data Use</div>
<div style="position:absolute;left:976.40px;top:1497.00px;white-space:nowrap;font-family:'Liberation Sans',sans-serif;font-size:15.29px;line-height:1;font-weight:400;font-style:normal;color:#3f57a6;letter-spacing:-0.080px;">Freedom of Information Act<svg width="11" height="11" viewBox="0 0 11 11" style="margin-left:4px;vertical-align:-1px"><path d="M4.5 1 L1 1 L1 10 L10 10 L10 6.5" fill="none" stroke="#3f57a6" stroke-width="1.3"/><path d="M6.5 1 L10 1 L10 4.5 M10 1 L5 6" fill="none" stroke="#3f57a6" stroke-width="1.3"/></svg></div>
<div style="position:absolute;left:976.40px;top:1531.00px;white-space:nowrap;font-family:'Liberation Sans',sans-serif;font-size:15.29px;line-height:1;font-weight:400;font-style:normal;color:#3f57a6;letter-spacing:-0.235px;">Accessibility</div>
<div style="position:absolute;left:1224.20px;top:1362.00px;white-space:nowrap;font-family:'Liberation Sans',sans-serif;font-size:15.9px;line-height:1;font-weight:700;font-style:normal;color:#1b1b1b;letter-spacing:-0.009px;">Customer Service</div>
<div style="position:absolute;left:1224.20px;top:1396.00px;white-space:nowrap;font-family:'Liberation Sans',sans-serif;font-size:15.29px;line-height:1;font-weight:400;font-style:normal;color:#3f57a6;letter-spacing:-0.346px;">Help</div>
<div style="position:absolute;left:1224.20px;top:1430.00px;white-space:nowrap;font-family:'Liberation Sans',sans-serif;font-size:15.29px;line-height:1;font-weight:400;font-style:normal;color:#3f57a6;letter-spacing:-0.309px;">Check Entity Status</div>
<div style="position:absolute;left:1224.20px;top:1463.00px;white-space:nowrap;font-family:'Liberation Sans',sans-serif;font-size:15.29px;line-height:1;font-weight:400;font-style:normal;color:#3f57a6;letter-spacing:-0.520px;">Federal Service Desk<svg width="11" height="11" viewBox="0 0 11 11" style="margin-left:4px;vertical-align:-1px"><path d="M4.5 1 L1 1 L1 10 L10 10 L10 6.5" fill="none" stroke="#3f57a6" stroke-width="1.3"/><path d="M6.5 1 L10 1 L10 4.5 M10 1 L5 6" fill="none" stroke="#3f57a6" stroke-width="1.3"/></svg></div>
<div style="position:absolute;left:1224.20px;top:1498.00px;white-space:nowrap;font-family:'Liberation Sans',sans-serif;font-size:15.29px;line-height:1;font-weight:400;font-style:normal;color:#3f57a6;letter-spacing:-0.503px;">External Resources</div>
<div style="position:absolute;left:1224.20px;top:1531.00px;white-space:nowrap;font-family:'Liberation Sans',sans-serif;font-size:15.29px;line-height:1;font-weight:400;font-style:normal;color:#3f57a6;letter-spacing:-0.229px;">Contact</div>
<div style="position:absolute;left:683.40px;top:1580.00px;white-space:nowrap;font-family:'Liberation Mono',monospace;font-size:14.24px;line-height:1;font-weight:700;font-style:normal;color:#3d3d3d;letter-spacing:0.001px;">WARNING</div>
<div style="position:absolute;left:659.00px;top:1603.00px;white-space:nowrap;font-family:'Liberation Sans',sans-serif;font-size:13.52px;line-height:1;font-weight:400;font-style:normal;color:#333;letter-spacing:-0.319px;">This is a U.S. General Services Administration Federal Government computer system that is</div>
<div style="position:absolute;left:1184.60px;top:1603.00px;white-space:nowrap;font-family:'Liberation Sans',sans-serif;font-size:13px;line-height:1;font-weight:700;font-style:normal;color:#1b1b1b;letter-spacing:-0.584px;">"FOR OFFICIAL USE ONLY."</div>
<div style="position:absolute;left:1350.00px;top:1603.00px;white-space:nowrap;font-family:'Liberation Sans',sans-serif;font-size:13.52px;line-height:1;font-weight:400;font-style:normal;color:#333;letter-spacing:-0.531px;">This system is</div>
<div style="position:absolute;left:659.00px;top:1621.00px;white-space:nowrap;font-family:'Liberation Sans',sans-serif;font-size:13.52px;line-height:1;font-weight:400;font-style:normal;color:#333;letter-spacing:-0.058px;">subject to monitoring. Individuals found performing unauthorized activities are subject to disciplinary action including criminal</div>
<div style="position:absolute;left:659.00px;top:1639.00px;white-space:nowrap;font-family:'Liberation Sans',sans-serif;font-size:13.52px;line-height:1;font-weight:400;font-style:normal;color:#333;letter-spacing:-0.040px;">prosecution.</div>
<div style="position:absolute;left:659.00px;top:1675.00px;white-space:nowrap;font-family:'Liberation Sans',sans-serif;font-size:13.52px;line-height:1;font-weight:400;font-style:normal;color:#333;letter-spacing:-0.164px;">This system contains Controlled Unclassified Information (CUI). All individuals viewing, reproducing or disposing of this information are</div>
<div style="position:absolute;left:659.00px;top:1693.00px;white-space:nowrap;font-family:'Liberation Sans',sans-serif;font-size:13.52px;line-height:1;font-weight:400;font-style:normal;color:#333;letter-spacing:-0.434px;">required to protect it in accordance with 32 CFR Part 2002 and GSA Order CIO 2103.2 CUI Policy.</div>
<div style="position:absolute;left:480.00px;top:1750.00px;white-space:nowrap;font-family:'Liberation Sans',sans-serif;font-size:19.9px;line-height:1;font-weight:700;font-style:normal;color:#fff;letter-spacing:0.034px;">SAM.gov</div>
<div style="position:absolute;left:480.00px;top:1780.00px;white-space:nowrap;font-family:'Liberation Sans',sans-serif;font-size:20.7px;line-height:1;font-weight:700;font-style:normal;color:#fff;letter-spacing:0.012px;">An official website of the U.S. General Services Administration</div>
</body></html>
